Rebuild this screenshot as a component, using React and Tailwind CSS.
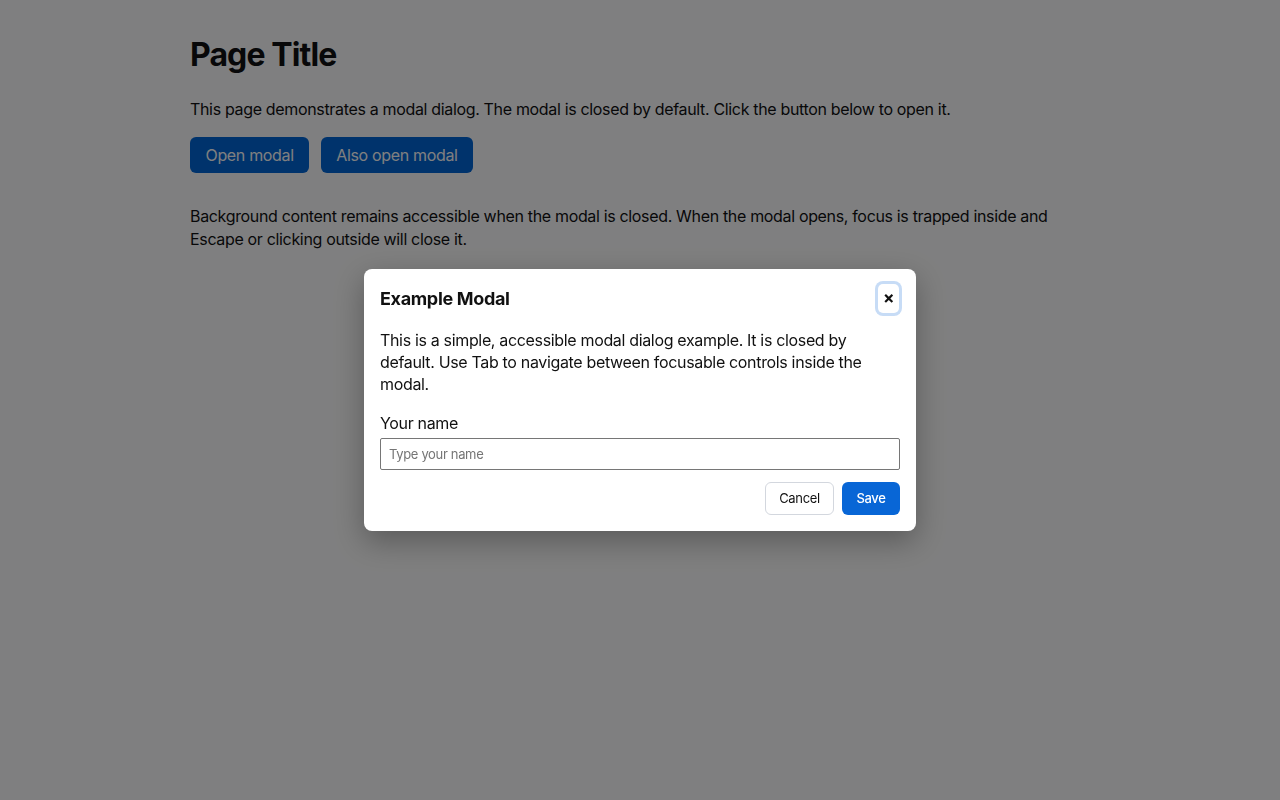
import { useState } from 'react';

const font = { fontFamily: 'Inter, "Noto Sans", sans-serif' };

const App = () => {
  const [isOpen, setIsOpen] = useState(true);
  const [name, setName] = useState('');

  return (
    <div className="relative min-h-[800px] bg-white text-[#111] tracking-[-0.021em]" style={font}>
      {/* Page content */}
      <main className="mx-auto max-w-[900px] pt-[36px]">
        <h1 className="text-[32px] font-bold leading-[1.2] tracking-[-0.028em]">Page Title</h1>
        <p className="mt-[23px] text-[16px] leading-[24px]">
          This page demonstrates a modal dialog. The modal is closed by default. Click the button below to open it.
        </p>
        <div className="mt-[16px] flex gap-[12px]">
          <button
            onClick={() => setIsOpen(true)}
            className="h-[36px] rounded-[6px] bg-[#0066d6] px-[15.5px] text-[16px] text-white"
          >
            Open modal
          </button>
          <button
            onClick={() => setIsOpen(true)}
            className="h-[36px] rounded-[6px] bg-[#0066d6] px-[15px] text-[16px] text-white"
          >
            Also open modal
          </button>
        </div>
        <p className="mt-[32px] text-[16px] leading-[23px]">
          Background content remains accessible when the modal is closed. When the modal opens, focus is trapped inside and
          Escape or clicking outside will close it.
        </p>
      </main>

      {/* Modal */}
      {isOpen && (
        <div
          className="fixed inset-0 flex items-center justify-center bg-[rgba(0,0,2,0.5)]"
          onClick={() => setIsOpen(false)}
        >
          <div
            role="dialog"
            aria-modal="true"
            onClick={(e) => e.stopPropagation()}
            className="w-[552px] rounded-[8px] bg-white px-[16px] pt-[15px] pb-[16px] shadow-[0_10px_30px_rgba(0,0,0,0.3)]"
          >
            <div className="flex items-center justify-between">
              <h2 className="text-[18px] font-bold leading-[24px]">Example Modal</h2>
              <button
                onClick={() => setIsOpen(false)}
                aria-label="Close"
                className="mr-[1px] flex h-[29px] w-[21px] items-center justify-center rounded-[5px] bg-white text-[17px] font-bold leading-none ring-[3px] ring-[#c7dcf6]"
              >
                ×
              </button>
            </div>
            <p className="mt-[16px] text-[16px] leading-[22px]">
              This is a simple, accessible modal dialog example. It is closed by default. Use Tab to navigate between
              focusable controls inside the modal.
            </p>
            <label className="mt-[17px] block text-[16px] leading-[22px]" htmlFor="name">
              Your name
            </label>
            <input
              id="name"
              value={name}
              onChange={(e) => setName(e.target.value)}
              placeholder="Type your name"
              className="mt-[4px] block h-[32px] w-full rounded-[2px] border border-[#767676] px-[8px] text-[13px] placeholder:text-[#757575]"
            />
            <div className="mt-[12px] flex justify-end gap-[8px]">
              <button
                onClick={() => setIsOpen(false)}
                className="h-[33px] w-[69px] rounded-[6px] border border-[#d3d7de] bg-white text-[13px] text-[#111]"
              >
                Cancel
              </button>
              <button
                onClick={() => setIsOpen(false)}
                className="h-[33px] w-[58px] rounded-[6px] bg-[#0866d6] text-[13px] font-medium text-white"
              >
                Save
              </button>
            </div>
          </div>
        </div>
      )}
    </div>
  );
};

export default App;
